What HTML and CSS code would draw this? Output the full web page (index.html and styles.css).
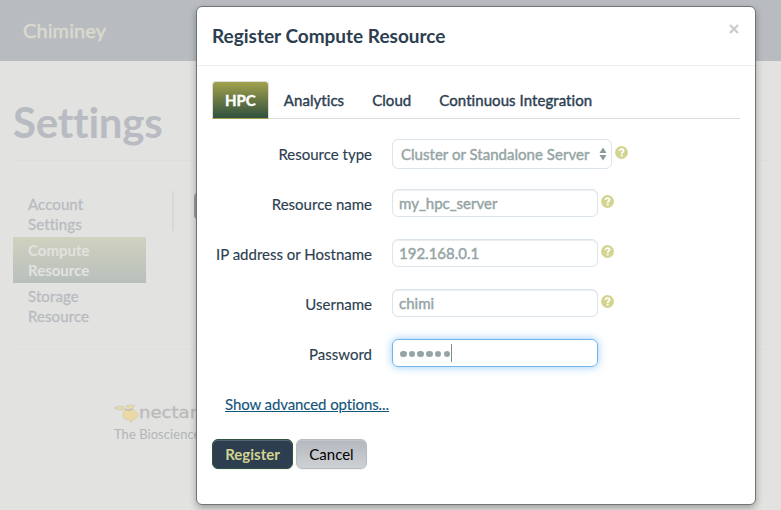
FILE: index.html
```
<!DOCTYPE html>
<html lang="en">
<head>
<meta charset="utf-8">
<title>Chiminey</title>
<link rel="stylesheet" href="styles.css">
</head>
<body>
<svg class="sprite" width="0" height="0" aria-hidden="true">
  <symbol id="help" viewBox="0 0 14 14">
    <circle cx="7" cy="7" r="6.900" fill="#d3d490"/>
    <path d="M4.700 5.300C4.900 3.900 5.800 3.400 7 3.400c1.400 0 2.300.7 2.300 1.800C9.300 6.700 7.200 6.600 7.200 8.300" fill="none" stroke="#fff" stroke-width="1.900"/>
    <rect x="6.200" y="9.300" width="2" height="2" fill="#fff"/>
  </symbol>
</svg>
<div class="page">
  <header class="navbar"><span class="brand">Chiminey</span></header>
  <main class="content">
    <h1 class="title">Settings</h1>
    <div class="columns">
      <nav class="side">
        <a class="side-item">Account<br>Settings</a>
        <a class="side-item active">Compute<br>Resource</a>
        <a class="side-item">Storage<br>Resource</a>
      </nav>
      <div class="divider"></div>
      <div class="page-button"></div>
    </div>
  </main>
  <footer class="footer">
    <div class="logo">
      <svg width="25" height="20" viewBox="0 0 25 20">
        <g stroke="#cbc4b2" stroke-width=".6">
          <path d="M0 4Q4 1 10 2.500L12 4.500Q6 8 0 4Z" fill="#e4d9ae"/>
          <path d="M12 2Q16-.5 21 2L19 4.500Q15 5.500 12 2Z" fill="#e5dcae"/>
          <path d="M11 6.500L15 5L21 6.500L24.500 10.500L22 14.500L18.500 16L17 19L15.500 16L10.500 15L8.500 10.500Z" fill="#ead9a4"/>
        </g>
        <path d="M11 5L15 6.500L19 5" fill="none" stroke="#bdb9ae" stroke-width="1"/>
      </svg>
      <span class="logo-name">nectar</span>
    </div>
    <div class="footer-text">The Bioscience</div>
  </footer>
</div>
<section class="modal">
  <div class="modal-header">
    <h3 class="modal-title">Register Compute Resource</h3>
    <svg class="close" width="10" height="10" viewBox="0 0 10 10"><path d="M1 1L9 9M9 1L1 9" stroke="#ccc" stroke-width="2.400"/></svg>
  </div>
  <div class="modal-body">
    <div class="tabs">
      <a class="tab selected">HPC</a>
      <a class="tab">Analytics</a>
      <a class="tab">Cloud</a>
      <a class="tab">Continuous Integration</a>
    </div>
    <div class="form">
      <div class="row">
        <label class="label">Resource type</label>
        <div class="field select"><span>Cluster or Standalone Server</span>
          <svg width="8" height="14" viewBox="0 0 8 14"><path d="M4 .5L7.500 6H.5ZM4 13.500L.5 8H7.500Z" fill="#8b9a9d"/></svg>
        </div>
        <svg class="help"><use href="#help"/></svg>
      </div>
      <div class="row">
        <label class="label">Resource name</label>
        <div class="field">my_hpc_server</div>
        <svg class="help"><use href="#help"/></svg>
      </div>
      <div class="row">
        <label class="label">IP address or Hostname</label>
        <div class="field">192.168.0.1</div>
        <svg class="help"><use href="#help"/></svg>
      </div>
      <div class="row">
        <label class="label">Username</label>
        <div class="field">chimi</div>
        <svg class="help"><use href="#help"/></svg>
      </div>
      <div class="row">
        <label class="label">Password</label>
        <div class="field focused">
          <i class="dot"></i><i class="dot"></i><i class="dot"></i><i class="dot"></i><i class="dot"></i><i class="dot"></i><i class="caret"></i>
        </div>
      </div>
    </div>
    <a class="advanced">Show advanced options...</a>
    <div class="actions">
      <button class="btn primary">Register</button>
      <button class="btn">Cancel</button>
    </div>
  </div>
</section>
</body>
</html>
```
FILE: styles.css
```
* { box-sizing: border-box; }
body {
  margin: 0;
  width: 781px;
  height: 510px;
  overflow: hidden;
  position: relative;
  background: #e2e2e0;
  font: 15px/20px Lato, sans-serif;
  font-variant-ligatures: none;
  color: #2c3e50;
}
.sprite { display: block; }
.page { height: 510px; overflow: hidden; }
.navbar {
  height: 61px;
  padding: 20px 23px 0;
  background: #b8bbc0;
}
.brand { font-size: 20px; letter-spacing: .1px; color: #dadacd; -webkit-text-stroke: .5px #dadacd; }
.content { height: 289px; padding: 0 13px; }
.title {
  margin: 0;
  height: 100px;
  padding-top: 37px;
  border-bottom: 1px solid #dededc;
  font-size: 42px;
  line-height: 48px;
  font-weight: 700;
  letter-spacing: -.25px;
  color: #b8bcc2;
}
.columns { display: flex; padding-top: 30px; }
.side { width: 133px; }
.side-item {
  display: block;
  height: 46px;
  padding: 3px 15px 0;
  color: #b8bcc0;
  letter-spacing: .1px;
  -webkit-text-stroke: .3px;
}
.side-item.active {
  background: linear-gradient(#d0d1bf, #b8bfbc);
  color: #e2e2e0;
  font-weight: 700;
  letter-spacing: 0;
  -webkit-text-stroke: 0;
}
.divider { width: 2px; height: 40px; margin-left: 26px; background: #d8d8d7; }
.page-button { width: 30px; height: 28px; margin: 1px 0 0 20px; border-radius: 5px; background: #989da3; }
.footer { margin: -1px 13px 0; padding: 54px 0 0 101px; border-top: 1px solid #dededc; }
.logo { display: flex; height: 20px; }
.logo-name {
  font: 16px/18px "DejaVu Sans", sans-serif;
  color: #bababa;
  transform: scaleX(1.13);
  transform-origin: left;
  -webkit-text-stroke: .3px;
}
.footer-text { margin-top: 1px; font-size: 13px; line-height: 18px; letter-spacing: .05px; color: #b2b5b8; white-space: nowrap; }

.modal {
  position: absolute;
  left: 196px;
  top: 6px;
  width: 560px;
  height: 499px;
  border: 1px solid #717477;
  border-radius: 6px;
  background: #fff;
  box-shadow: 0 3px 7px rgba(0, 0, 0, .3);
}
.modal-header {
  display: flex;
  justify-content: space-between;
  height: 59px;
  padding: 14px 16px 0 15px;
  border-bottom: 1px solid #eee;
}
.modal-title { margin: 0; font-size: 19px; line-height: 30px; font-weight: 700; }
.close { margin-top: 3px; }
.modal-body { padding: 15px; }
.tabs { display: flex; height: 38px; border-bottom: 1px solid #ddd; }
.tab {
  height: 38px;
  margin-right: 2px;
  padding: 8px 12px;
  border: 1px solid transparent;
  letter-spacing: .06px;
  -webkit-text-stroke: .4px;
}
.tab.selected {
  border-color: #ddd #ddd #a2a14c;
  border-radius: 4px 4px 0 0;
  background: linear-gradient(#a2a14c, #2f513e);
  color: #fff;
  font-weight: 700;
  letter-spacing: 0;
}
.form { padding-top: 20px; }
.row { display: flex; height: 50px; }
.label { width: 160px; padding-top: 5px; text-align: right; -webkit-text-stroke: .15px; }
.field {
  display: flex;
  align-items: center;
  width: 206px;
  height: 28px;
  margin-left: 20px;
  padding: 0 6px;
  border: 1px solid #dce4ec;
  border-radius: 6px;
  box-shadow: inset 0 1px 1px rgba(0, 0, 0, .075);
  color: #95a5a6;
  -webkit-text-stroke: .45px;
}
.field.select {
  justify-content: space-between;
  width: 220px;
  height: 30px;
  padding: 0 4px 1px 8px;
  box-shadow: none;
  letter-spacing: .03px;
}
.field.focused {
  border-color: #72b4eb;
  box-shadow: 0 0 8px rgba(82, 168, 236, .6);
}
.dot { width: 6.400px; height: 6.400px; margin: 2px 1.150px 0; border-radius: 50%; background: #95a5a6; }
.caret { width: 1px; height: 18px; background: #7f8d90; }
.help { width: 13px; height: 13px; margin: 6px 0 0 3px; }
.select + .help { margin-top: 7px; }
.advanced {
  display: block;
  width: max-content;
  margin: 5px 0 0 13px;
  color: #14557b;
  letter-spacing: -.1px;
  text-decoration: underline;
  -webkit-text-stroke: .15px;
}
.actions { display: flex; gap: 3px; margin-top: 25px; }
.btn {
  width: 71px;
  height: 30px;
  padding: 0;
  border: 1px solid #b8bcc0;
  border-radius: 6px;
  background: linear-gradient(#b3b8be, #ced1d4);
  box-shadow: inset 0 1px 0 rgba(255, 255, 255, .2), 0 1px 2px rgba(0, 0, 0, .05);
  font: 15px/20px Lato, sans-serif;
  color: #000;
}
.btn.primary {
  width: 81px;
  border-color: #2f513e;
  background: #2c3e50;
  color: #d3d490;
  font-weight: 700;
}
```
